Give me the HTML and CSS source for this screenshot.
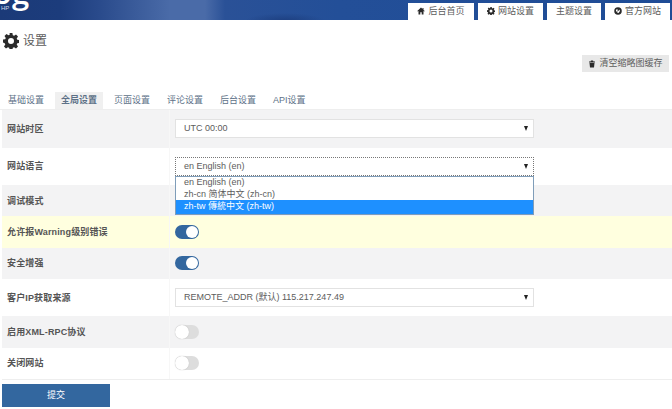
FILE: index.html
```html
<!DOCTYPE html>
<html lang="zh-CN">
<head>
<meta charset="utf-8">
<title>设置</title>
<link rel="stylesheet" href="styles.css">
</head>
<body>
<header class="topbar">
  <div class="logo"><span class="logo-g">og</span><span class="logo-php">HP</span></div>
  <nav class="topnav">
    <a class="toptab"><svg class="ico" viewBox="0 0 16 16"><path d="M8 1 .5 8.2l1.2 1L3 8v7h3.6v-4.5h2.8V15H13V8l1.3 1.2 1.2-1L13 5.800V2h-2v2z" fill="#2b2b2b"/></svg>后台首页</a>
    <a class="toptab tab-mid"><svg class="ico" viewBox="0 0 16 16"><use href="#gear"/></svg>网站设置</a>
    <a class="toptab tab-plain">主题设置</a>
    <a class="toptab tab-mid"><svg class="ico" viewBox="0 0 16 16"><circle cx="8" cy="8" r="7.500" fill="#2b2b2b"/><path d="M4 5h4L6.500 7.500H9.500L11 5l1 3-3 4H6.500l1-3H4z" fill="#fff"/></svg>官方网站</a>
  </nav>
</header>

<svg class="defs" width="0" height="0"><defs>
  <path id="gear" fill="#2b2b2b" fill-rule="evenodd" d="M6.600 0h2.800l.4 2.200 1.300.6 1.900-1.300 2 2-1.300 1.900.6 1.300 2.200.4v2.800l-2.200.4-.6 1.300 1.300 1.900-2 2-1.900-1.300-1.300.6-.4 2.200H6.600l-.4-2.200-1.300-.6-1.900 1.300-2-2 1.300-1.900-.6-1.300L0 9.400V6.600l2.200-.4.6-1.300-1.300-1.900 2-2 1.900 1.300 1.300-.6zM8 5a3 3 0 1 0 0 6 3 3 0 0 0 0-6z"/>
</defs></svg>

<div class="title-row">
  <svg class="title-ico" viewBox="0 0 16 16"><use href="#gear"/></svg>
  <h1>设置</h1>
</div>

<div class="action-row">
  <button class="clear-btn" type="button"><svg class="ico" viewBox="0 0 16 16"><path d="M6 1h4l1 2h3v2H2V3h3zM3 6h10l-1 9H4z" fill="#2b2b2b"/></svg>清空缩略图缓存</button>
</div>

<ul class="tabs">
  <li>基础设置</li>
  <li class="active">全局设置</li>
  <li>页面设置</li>
  <li>评论设置</li>
  <li>后台设置</li>
  <li>API设置</li>
</ul>

<div class="form">
  <div class="row gray tall"><div class="label">网站时区</div><div class="field"><div class="select"><span>UTC 00:00</span><i class="caret"></i></div></div></div>
  <div class="row white tall"><div class="label">网站语言</div><div class="field"><div class="select focus"><span>en English (en)</span><i class="caret"></i></div>
    <ul class="dropdown">
      <li class="opt-first">en English (en)</li>
      <li>zh-cn 简体中文 (zh-cn)</li>
      <li class="picked">zh-tw 傳統中文 (zh-tw)</li>
    </ul></div></div>
  <div class="row gray"><div class="label">调试模式</div><div class="field"></div></div>
  <div class="row yellow"><div class="label">允许报Warning级别错误</div><div class="field"><i class="switch on"></i></div></div>
  <div class="row gray"><div class="label">安全增强</div><div class="field"><i class="switch on"></i></div></div>
  <div class="row white tall"><div class="label">客户IP获取来源</div><div class="field"><div class="select"><span>REMOTE_ADDR (默认) 115.217.247.49</span><i class="caret"></i></div></div></div>
  <div class="row gray"><div class="label">启用XML-RPC协议</div><div class="field"><i class="switch"></i></div></div>
  <div class="row white"><div class="label">关闭网站</div><div class="field"><i class="switch"></i></div></div>
</div>

<button class="submit" type="button">提交</button>
</body>
</html>
```
FILE: styles.css
```css
* { box-sizing: border-box; }
html, body { margin: 0; padding: 0; }
body {
  width: 672px; height: 409px; overflow: hidden; background: #fff; color: #5c5c5c;
  font: 9px/1.2 "Liberation Sans", "Noto Sans CJK SC", sans-serif;
}
ul { list-style: none; margin: 0; padding: 0; }
.defs { position: absolute; }

.topbar {
  height: 20px; display: flex; justify-content: flex-end; align-items: flex-end;
  position: relative; overflow: hidden;
  background: radial-gradient(ellipse 40px 8px at 285px 21px, #1d3f80, transparent),
              linear-gradient(90deg, #1b3a78 0, #1c3c7c 60px, #2a4b8c 100px, #4a6ba8 170px, #4a6ba8 205px, #2a5197 225px, #234f98 340px, #1f4c96 672px);
}
.logo { position: absolute; left: 0; top: 0; color: #fff; }
.logo-g { position: absolute; left: -7px; top: -21px; font: 600 31px/26px "Open Sans", sans-serif; }
.logo-php { position: absolute; left: 1px; top: 5px; font-size: 6px; color: #cfd8e8; }
.topnav { display: flex; gap: 4px; padding-right: 2px; }
.toptab {
  height: 17px; width: 66px; background: #fff; color: #5c5c5c; display: flex;
  align-items: center; justify-content: center; gap: 3px; padding-bottom: 1px;
}
.tab-mid { width: 65px; }
.tab-plain { width: 54px; }
.ico { width: 8px; height: 8px; flex: none; }

.title-row { height: 39px; padding: 3px 0 0 3px; display: flex; align-items: center; gap: 4px; }
.title-ico { width: 16px; height: 16px; }
h1 { margin: 0; font-size: 12px; font-weight: 400; color: #5c5c5c; }

.action-row { height: 14px; margin-top: -4px; padding-right: 3px; display: flex; justify-content: flex-end; align-items: flex-start; }
.clear-btn {
  height: 17px; width: 87px; border: 0; background: #e8e8e8; color: #5c5c5c; padding: 0;
  font: 9px/1 "Liberation Sans", "Noto Sans CJK SC", sans-serif; display: flex; align-items: center;
  justify-content: center; gap: 3px;
}

.tabs { display: flex; height: 18px; margin-top: 23px; padding-left: 2px; border-bottom: 1px solid #eee; color: #5d7187; }
.tabs li { padding: 0 6px; line-height: 17px; margin-right: 5px; }
.tabs .active { background: #f0f0f0; font-weight: 700; }
.tabs li:last-child { margin-right: 0; }

.form { margin-left: 2px; border-bottom: 1px solid #eee; }
.row { height: 31.3px; display: flex; align-items: stretch; }
.row.tall { height: 37.5px; }
.gray { background: #f3f3f4; }
.white { background: #fff; }
.yellow { background: #ffffdf; }
.label { width: 168px; padding: 1px 0 0 5px; display: flex; align-items: center; font-weight: 700; letter-spacing: .15px; color: #555; border-right: 1px solid #f7f7f7; }
.field { position: relative; padding-left: 5px; display: flex; align-items: center; flex: 1; }

.select {
  width: 359px; height: 19px; background: #fff; border: 1px solid #e2e2e2;
  display: flex; align-items: center; justify-content: space-between; padding: 0 5px 0 8px;
}
.select.focus { border: 1px dotted #777; }
.caret { width: 0; height: 0; border-left: 2.500px solid transparent; border-right: 2.500px solid transparent; border-top: 5px solid #222; }

.dropdown {
  position: absolute; left: 5px; top: 28px; width: 359px; z-index: 2; background: #fff;
  border: 1px solid #7f9db9;
}
.dropdown li { height: 12px; line-height: 12px; padding-left: 8px; }
.dropdown .opt-first { height: 11px; line-height: 11px; }
.dropdown .picked { background: #1e90ff; color: #fff; height: 14px; line-height: 13px; }

.switch { display: block; width: 24px; height: 14px; border-radius: 7px; background: #ddd; position: relative; }
.switch::after { content: ""; position: absolute; left: 0; top: 0; width: 14px; height: 14px; border-radius: 50%; background: #fff; box-shadow: 0 0 1px #aaa; }
.switch.on { background: #33679f; }
.switch.on::after { left: 11px; top: 1px; width: 12px; height: 12px; box-shadow: none; }

.submit {
  display: block; margin: 4px 0 0 2px; width: 108px; height: 23px; border: 0; background: #33679f;
  color: #fff; font: 9px/1 "Liberation Sans", "Noto Sans CJK SC", sans-serif;
}
```
